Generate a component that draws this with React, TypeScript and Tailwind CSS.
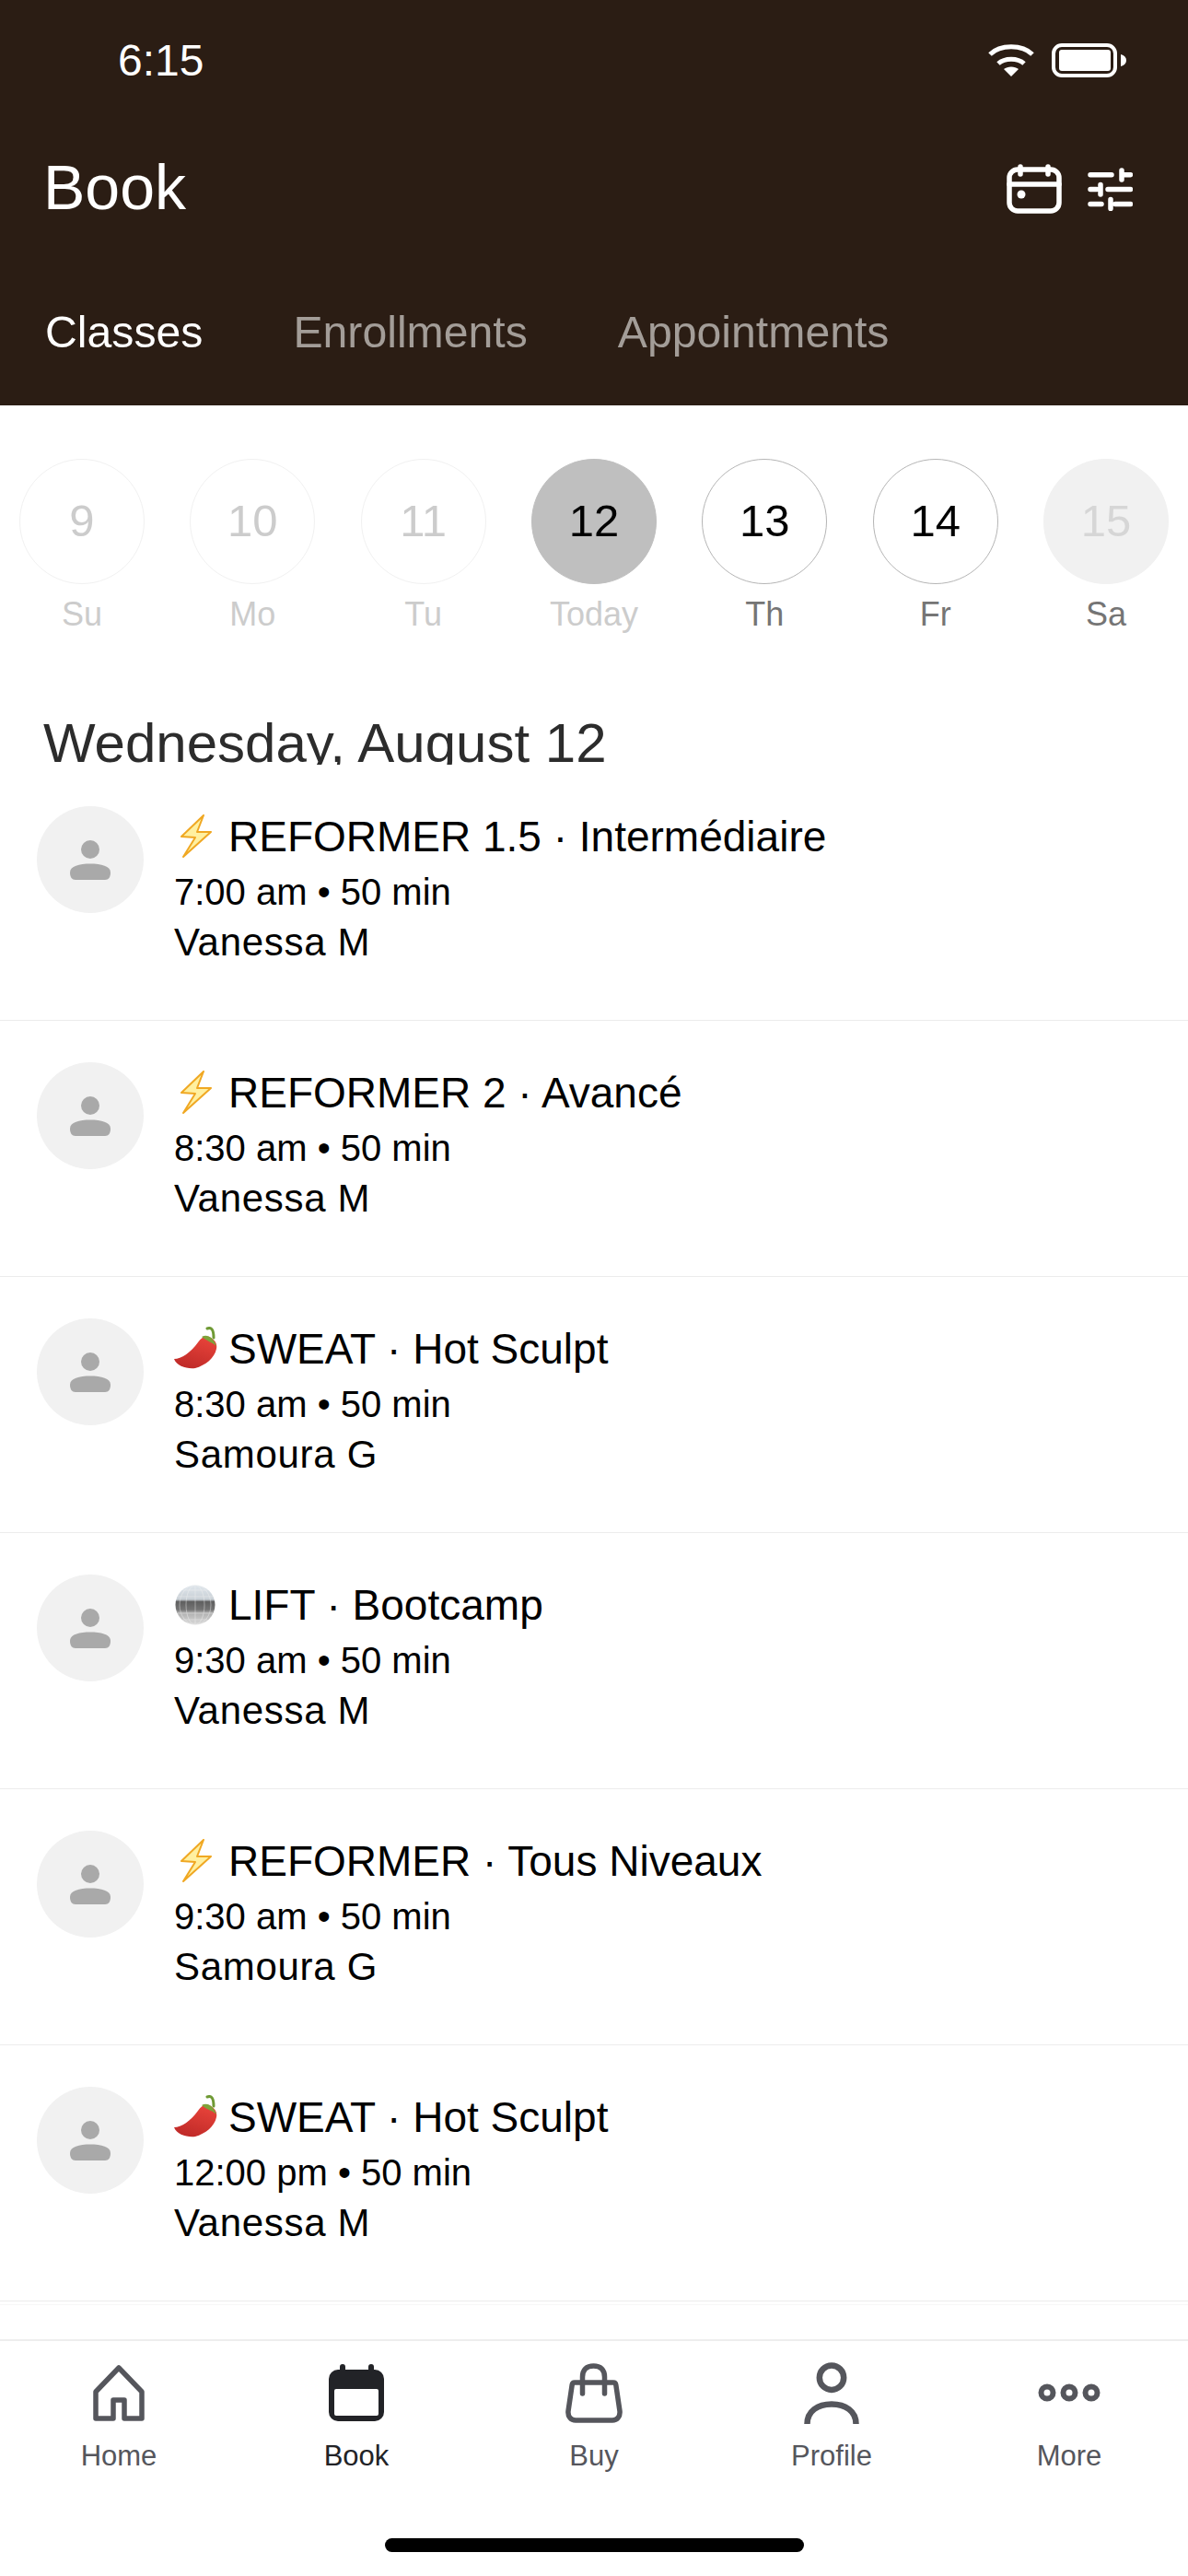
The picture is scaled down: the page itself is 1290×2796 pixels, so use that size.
import React from 'react';

const FONT = "font-['Liberation_Sans',Arial,sans-serif]";

type Kind = 'bolt' | 'chili' | 'disco';

const days = [
  { num: '9', label: 'Su', circle: 'border-[#f1f1f1] bg-white', numText: 'text-[#cccccc]', labelText: 'text-[#cccccc]' },
  { num: '10', label: 'Mo', circle: 'border-[#f1f1f1] bg-white', numText: 'text-[#cccccc]', labelText: 'text-[#cccccc]' },
  { num: '11', label: 'Tu', circle: 'border-[#f1f1f1] bg-white', numText: 'text-[#cccccc]', labelText: 'text-[#cccccc]' },
  { num: '12', label: 'Today', circle: 'border-[#bfbfbf] bg-[#bfbfbf]', numText: 'text-black', labelText: 'text-[#cccccc]' },
  { num: '13', label: 'Th', circle: 'border-[#b5b5b5] bg-white', numText: 'text-black', labelText: 'text-[#757575]' },
  { num: '14', label: 'Fr', circle: 'border-[#b5b5b5] bg-white', numText: 'text-black', labelText: 'text-[#757575]' },
  { num: '15', label: 'Sa', circle: 'border-[#f1f1f1] bg-[#f1f1f1]', numText: 'text-[#d6d6d6]', labelText: 'text-[#757575]' },
];

const classes: { kind: Kind; title: string; time: string; teacher: string }[] = [
  { kind: 'bolt', title: 'REFORMER 1.5 · Intermédiaire', time: '7:00 am • 50 min', teacher: 'Vanessa M' },
  { kind: 'bolt', title: 'REFORMER 2 · Avancé', time: '8:30 am • 50 min', teacher: 'Vanessa M' },
  { kind: 'chili', title: 'SWEAT · Hot Sculpt', time: '8:30 am • 50 min', teacher: 'Samoura G' },
  { kind: 'disco', title: 'LIFT · Bootcamp', time: '9:30 am • 50 min', teacher: 'Vanessa M' },
  { kind: 'bolt', title: 'REFORMER · Tous Niveaux', time: '9:30 am • 50 min', teacher: 'Samoura G' },
  { kind: 'chili', title: 'SWEAT · Hot Sculpt', time: '12:00 pm • 50 min', teacher: 'Vanessa M' },
];

function Emoji({ kind }: { kind: Kind }) {
  if (kind === 'bolt') {
    return (
      <svg width="48" height="48" viewBox="0 0 48 48" className="shrink-0">
        <path d="M32 1 L8 24 L23 25 L10 46 L40 19 L25 19 Z" fill="#fff0a0" stroke="#f0a823" strokeWidth="2" strokeLinejoin="round" />
      </svg>
    );
  }
  if (kind === 'chili') {
    return (
      <svg width="48" height="48" viewBox="0 0 48 48" className="shrink-0">
        <defs>
          <linearGradient id="chili" x1="0.7" y1="0" x2="0.3" y2="1">
            <stop offset="0" stopColor="#e8433a" />
            <stop offset="1" stopColor="#bf2a28" />
          </linearGradient>
        </defs>
        <path d="M36 2 C41 0 43 4 43 12" fill="none" stroke="#6f9a35" strokeWidth="3" strokeLinecap="round" />
        <path d="M0 35 C8 35 18 28 26 17 C30 11 35 9 40 12 C45 15 47 19 46 24 C44 34 34 42 23 45 C14 46 3 43 0 35 Z" fill="url(#chili)" />
        <path d="M30 11 C35 8 42 10 46 21 C42 17 36 16 30 11 Z" fill="#7ea33a" />
      </svg>
    );
  }
  return (
    <svg width="48" height="48" viewBox="0 0 48 48" className="shrink-0">
      <defs>
        <linearGradient id="disco" x1="0" y1="0" x2="0" y2="1">
          <stop offset="0" stopColor="#dfe6ec" />
          <stop offset="0.36" stopColor="#c9d0d6" />
          <stop offset="0.42" stopColor="#5f5f5f" />
          <stop offset="0.62" stopColor="#747474" />
          <stop offset="0.7" stopColor="#b0b0b0" />
          <stop offset="1" stopColor="#dadada" />
        </linearGradient>
      </defs>
      <circle cx="23" cy="24" r="21.5" fill="url(#disco)" />
      <g fill="none" stroke="#f4f4f4" strokeWidth="0.8" opacity="0.55">
        <path d="M4 15 H42 M4 33 H42 M10 8 H36 M10 40 H36" />
        <ellipse cx="23" cy="24" rx="10" ry="21.5" />
        <ellipse cx="23" cy="24" rx="17" ry="21.5" />
        <path d="M23 2.5 V45.5" />
      </g>
    </svg>
  );
}

function PersonGlyph() {
  return (
    <svg width="44" height="43" viewBox="0 0 44 43" fill="#a9a9a9">
      <circle cx="22" cy="10" r="10" />
      <path d="M0 35 C0 28 10 25.5 22 25.5 C34 25.5 44 28 44 35 C44 40 42 43 38 43 H6 C2 43 0 40 0 35 Z" />
    </svg>
  );
}

function ClassRow({ item }: { item: (typeof classes)[number] }) {
  return (
    <div className="box-border flex h-[278px] border-b border-[#ececec] pl-10 pt-[45px]">
      <div className="flex h-[116px] w-[116px] shrink-0 items-center justify-center rounded-full bg-[#f1f1f1]">
        <PersonGlyph />
      </div>
      <div className="ml-[33px] flex flex-col">
        <div className="mt-[8px] flex h-[50px] items-center gap-[11px] whitespace-nowrap text-[46px] leading-[50px] text-black">
          <Emoji kind={item.kind} />
          <span>{item.title}</span>
        </div>
        <div className="mt-[8px] whitespace-nowrap text-[40px] leading-[54px] text-black">{item.time}</div>
        <div className="mt-[1px] whitespace-nowrap text-[42px] leading-[54px] tracking-[0.7px] text-black">{item.teacher}</div>
      </div>
    </div>
  );
}

function NavItem({ label, active, children }: { label: string; active?: boolean; children: React.ReactNode }) {
  return (
    <div className="flex flex-1 flex-col items-center">
      <div className="flex h-[70px] w-[70px] items-center justify-center">{children}</div>
      <span className={`mt-[14px] text-[31px] leading-[40px] ${active ? 'text-[#222327]' : 'text-[#55565c]'}`}>{label}</span>
    </div>
  );
}

export default function App() {
  return (
    <div className={`${FONT} flex h-[2796px] w-[1290px] flex-col overflow-hidden bg-white`}>
      {/* header */}
      <div className="h-[440px] shrink-0 bg-[#2b1d14] text-white">
        <div className="flex h-[130px] items-center justify-between pl-[128px] pr-[67px]">
          <span className="mt-[1px] text-[48px] leading-none">6:15</span>
          <div className="flex items-center gap-[19px]">
            <svg width="50" height="36" viewBox="0 0 50 36" fill="none" stroke="white" strokeWidth="5">
              <path d="M2 12 C13 1 37 1 48 12" />
              <path d="M11 22 C18 15.5 32 15.5 39 22" />
              <path d="M17 28 C21 24.5 29 24.5 33 28 L25 36 Z" fill="white" stroke="none" />
            </svg>
            <svg width="81" height="37" viewBox="0 0 81 37">
              <rect x="2" y="2" width="67" height="33" rx="9" fill="none" stroke="white" strokeWidth="4" />
              <rect x="8" y="7" width="56" height="23" rx="3" fill="white" />
              <path d="M75 12 C79 13 81 15.5 81 18.5 C81 21.5 79 24 75 25 Z" fill="white" />
            </svg>
          </div>
        </div>
        <div className="mt-[23px] flex h-[100px] items-center justify-between pl-[47px] pr-[60px]">
          <span className="text-[68px] leading-none">Book</span>
          <div className="mt-[4px] flex items-center gap-[28px]">
            <svg width="60" height="54" viewBox="0 0 60 54" fill="none" stroke="white" strokeWidth="5.5" strokeLinecap="round">
              <rect x="3" y="6" width="54" height="45" rx="9" />
              <path d="M3 22 H57 M15 3 V11 M45 3 V11" />
              <circle cx="16" cy="33" r="4.5" fill="white" stroke="none" />
            </svg>
            <svg width="49" height="47" viewBox="0 0 49 47" fill="none" stroke="white" strokeWidth="5.5" strokeLinecap="round">
              <path d="M3 7.7 H26 M40 7.7 H46.5 M37 3 V13 M3 23.5 H10 M22 23.5 H46.5 M14 18.5 V29 M3 39.5 H15 M30 39.5 H46.5 M25 34.5 V44.5" />
            </svg>
          </div>
        </div>
        <div className="mt-[79px] flex items-center pl-[49px] text-[48.2px] leading-[56px]">
          <span>Classes</span>
          <span className="ml-[98px] text-[#a39d98]">Enrollments</span>
          <span className="ml-[98px] text-[#a39d98]">Appointments</span>
        </div>
      </div>

      {/* date strip */}
      <div className="flex h-[250px] shrink-0 justify-between px-[21px] pt-[58px]">
        {days.map((d) => (
          <div key={d.num} className="flex w-[136px] flex-col items-center">
            <div className={`flex h-[136px] w-[136px] shrink-0 items-center justify-center rounded-full border-[1.5px] text-[49px] ${d.circle} ${d.numText}`}>
              {d.num}
            </div>
            <span className={`mt-[11px] text-[36px] leading-[44px] ${d.labelText}`}>{d.label}</span>
          </div>
        ))}
      </div>

      <div className="h-[140px] shrink-0 overflow-hidden pl-[47px] pt-[82px] text-[60px] leading-[70px] text-[#2c2c2c]">
        Wednesday, August 12
      </div>

      {/* list */}
      <div className="flex-1 overflow-hidden">
        {classes.map((c, i) => (
          <ClassRow key={i} item={c} />
        ))}
        <div className="h-[4px] border-b border-[#f7f7f7]" />
      </div>

      {/* tab bar */}
      <div className="relative h-[257px] shrink-0 border-t-2 border-[#eeeeee] bg-white pt-[21px]">
        <div className="flex">
          <NavItem label="Home">
            <svg width="56" height="61" viewBox="0 0 56 61" fill="none" stroke="#55565c" strokeWidth="5.5" strokeLinejoin="round">
              <path d="M28 3 L53 29 V58 H34 V38 H22 V58 H3 V29 Z" />
            </svg>
          </NavItem>
          <NavItem label="Book" active>
            <svg width="60" height="62" viewBox="0 0 60 62">
              <rect x="12" y="0" width="6" height="12" rx="3" fill="#222327" />
              <rect x="43" y="0" width="6" height="12" rx="3" fill="#222327" />
              <rect x="0" y="6" width="60" height="56" rx="10" fill="#222327" />
              <rect x="6" y="27" width="48" height="29" rx="2" fill="white" />
            </svg>
          </NavItem>
          <NavItem label="Buy">
            <svg width="62" height="65" viewBox="0 0 62 65" fill="none" stroke="#55565c" strokeWidth="5.5" strokeLinecap="round" strokeLinejoin="round">
              <path d="M10 21 H52 C53.5 21 54.6 22 54.8 23.5 L59 52 C59.6 58 56 62 51 62 H11 C6 62 2.4 58 3 52 L7.2 23.5 C7.4 22 8.5 21 10 21 Z" />
              <path d="M18.5 33 V15 C18.5 7 23 3 30.5 3 C38 3 42.5 7 42.5 15 V33" />
            </svg>
          </NavItem>
          <NavItem label="Profile">
            <svg width="60" height="67" viewBox="0 0 60 67" fill="none" stroke="#55565c" strokeWidth="6.5">
              <circle cx="30" cy="16.7" r="13.2" />
              <path d="M3.5 67 C3.5 53 15 45.5 30 45.5 C45 45.5 56.5 53 56.5 67" />
            </svg>
          </NavItem>
          <NavItem label="More">
            <svg width="68" height="20" viewBox="0 0 68 20" fill="none" stroke="#55565c" strokeWidth="6">
              <circle cx="10" cy="10" r="6.5" />
              <circle cx="34" cy="10" r="6.5" />
              <circle cx="58" cy="10" r="6.5" />
            </svg>
          </NavItem>
        </div>
        <div className="absolute bottom-[26px] left-[418px] h-[15px] w-[455px] rounded-full bg-black" />
      </div>
    </div>
  );
}
